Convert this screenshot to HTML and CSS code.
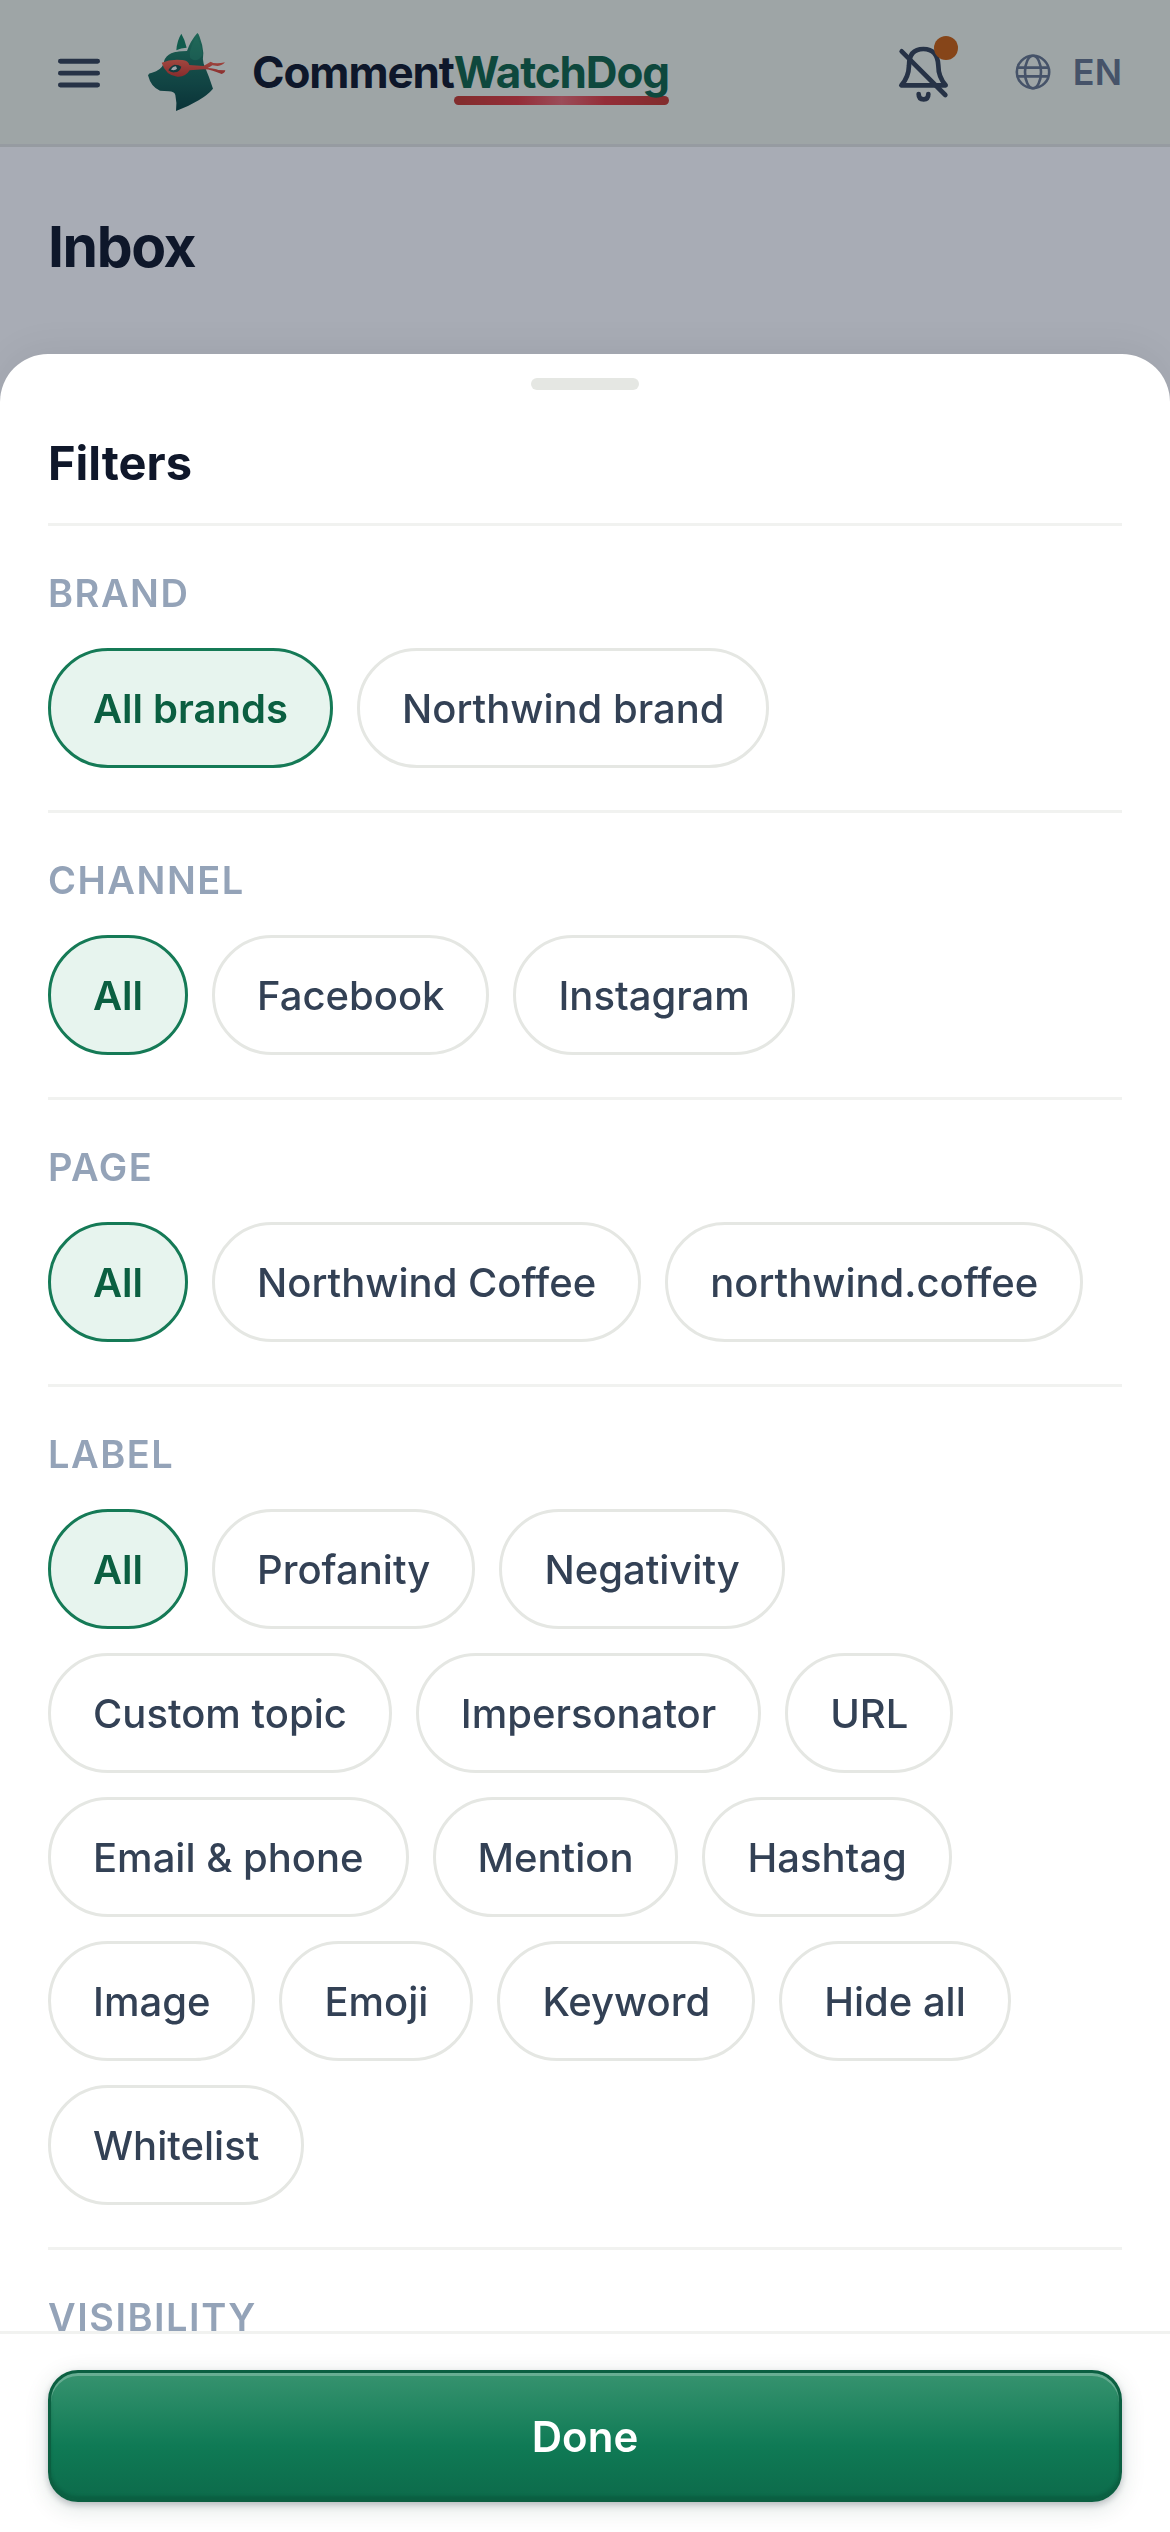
FILE: index.html
```html
<!DOCTYPE html>
<html lang="en">
  <head>
    <meta charset="UTF-8" />
    <meta name="viewport" content="width=device-width, initial-scale=1.0" />
    <title>Inbox</title>
    <link rel="stylesheet" href="styles.css">
  </head>
  <body>
    <header class="topbar">
      <button class="menu-btn" type="button" aria-label="Menu">
        <svg viewBox="0 0 24 24" fill="none" stroke="currentColor" stroke-width="2.2" stroke-linecap="round">
          <path d="M3.75 7.25h16.5M3.75 12.5h16.5M3.75 17.75h16.5" />
        </svg>
      </button>
      <a class="brand" href="#">
        <svg class="brand-logo" viewBox="45 32 246 246">
          <defs>
            <linearGradient id="fur" x1="0" y1="0" x2="0" y2="1">
              <stop offset="0" stop-color="#28926f" />
              <stop offset="0.35" stop-color="#1a6f5b" />
              <stop offset="0.65" stop-color="#135c51" />
              <stop offset="1" stop-color="#08423f" />
            </linearGradient>
            <linearGradient id="mask" x1="0" y1="0" x2="0" y2="1">
              <stop offset="0" stop-color="#f0614a" />
              <stop offset="1" stop-color="#c8382f" />
            </linearGradient>
          </defs>
          <path fill="#128160" d="M151 40 Q138 60 136 90 Q150 82 167 82 Q162 58 151 40Z" />
          <path fill="url(#fur)" d="M199 38 Q203 40 206 50 Q216 76 217 98 Q214 116 218 130 Q235 170 246 205 Q232 222 203 240 Q170 260 135 272 Q138 245 133 224 Q130 213 113 213 L87 211 Q60 201 51 165 Q53 158 63 157 Q90 150 97 132 Q102 94 152 93 L168 92 Q178 62 199 38Z" />
          <path fill="#2f9c78" opacity="0.45" d="M197 46 Q214 82 215 104 Q197 130 178 113 Q170 95 197 46Z" />
          <path fill="none" stroke="#d9e8e2" stroke-width="3" stroke-linecap="round" d="M135 93 Q150 86 167 89" />
          <path fill="url(#mask)" d="M92 127 Q120 115 154 119 Q172 121 175 134 L217 137 Q226 132 239 124 Q250 132 282 126 Q274 136 260 137 L244 135 Q235 141 230 143 Q252 145 262 149 L283 150 Q282 158 272 161 Q254 154 245 151 Q232 147 217 147 L176 150 Q163 171 139 169 Q104 165 92 127Z" />
          <path fill="#154f49" d="M112 150 Q119 136 131 133 Q145 133 151 139 Q147 155 131 156 Q119 157 112 150Z" />
          <path fill="#e8f0ee" d="M120 148 Q126 138 135 138 L138 145 Q132 152 120 148Z" />
        </svg>
        <span class="brand-name">Comment<span class="brand-accent">WatchDog</span></span>
      </a>
      <button class="bell-btn" type="button" aria-label="Notifications">
        <svg viewBox="231 127 162 180" fill="none" stroke="currentColor" stroke-width="14" stroke-linecap="round" stroke-linejoin="round">
          <path d="M241 257 H374 Q352 231 352 198 Q350 148 307 148 Q264 148 264 198 Q263 233 241 257Z" />
          <path d="M242 155L373 286" />
          <path d="M293 283 Q293 299 308 299 Q322 299 322 283" />
        </svg>
        <span class="bell-dot"></span>
      </button>
      <button class="lang-btn" type="button">
        <svg viewBox="0 0 36 36" fill="none" stroke="currentColor" stroke-width="2.6">
          <circle cx="18" cy="18" r="16.2" />
          <ellipse cx="18" cy="18" rx="8" ry="16.2" />
          <path d="M2.5 13.6h31M2.5 22.4h31" />
        </svg>
        EN
      </button>
    </header>
    <main class="page">
      <h1>Inbox</h1>
    </main>

    <div class="overlay">
      <section class="sheet" role="dialog" aria-labelledby="sheet-title">
        <div class="handle"></div>
        <div class="sheet-body">
          <h2 id="sheet-title">Filters</h2>
          <section class="group">
            <h3>Brand</h3>
            <div class="chips">
              <button class="chip active" type="button">All brands</button>
              <button class="chip" type="button">Northwind brand</button>
            </div>
          </section>
          <section class="group">
            <h3>Channel</h3>
            <div class="chips">
              <button class="chip active" type="button">All</button>
              <button class="chip" type="button">Facebook</button>
              <button class="chip" type="button">Instagram</button>
            </div>
          </section>
          <section class="group">
            <h3>Page</h3>
            <div class="chips">
              <button class="chip active" type="button">All</button>
              <button class="chip" type="button">Northwind Coffee</button>
              <button class="chip" type="button">northwind.coffee</button>
            </div>
          </section>
          <section class="group">
            <h3>Label</h3>
            <div class="chips">
              <button class="chip active" type="button">All</button>
              <button class="chip" type="button">Profanity</button>
              <button class="chip" type="button">Negativity</button>
              <button class="chip" type="button">Custom topic</button>
              <button class="chip" type="button">Impersonator</button>
              <button class="chip" type="button">URL</button>
              <button class="chip" type="button">Email &amp; phone</button>
              <button class="chip" type="button">Mention</button>
              <button class="chip" type="button">Hashtag</button>
              <button class="chip" type="button">Image</button>
              <button class="chip" type="button">Emoji</button>
              <button class="chip" type="button">Keyword</button>
              <button class="chip" type="button">Hide all</button>
              <button class="chip" type="button">Whitelist</button>
            </div>
          </section>
          <section class="group">
            <h3>Visibility</h3>
          </section>
        </div>
        <footer class="sheet-footer">
          <button class="done-btn" type="button">Done</button>
        </footer>
      </section>
    </div>
  </body>
</html>
```
FILE: styles.css
```css
* {
  box-sizing: border-box;
}
body {
  margin: 0;
  min-height: 100vh;
  overflow: hidden;
  background-color: #fbfcff;
  color: #0f172a;
  font-family: Inter, "Liberation Sans", sans-serif;
}
h1,
h2,
h3 {
  margin: 0;
}
button {
  padding: 0;
  border: none;
  background: none;
  color: inherit;
  font-family: inherit;
  cursor: pointer;
}
svg {
  display: block;
}

/* top bar */
.topbar {
  display: flex;
  align-items: center;
  height: 147px;
  padding: 0 48px;
  background-color: #ebf2e9;
  border-bottom: 3px solid #dfe2e0;
}
.menu-btn {
  margin-left: 4px;
  color: #334155;
}
.menu-btn svg {
  width: 54px;
  height: 54px;
}
.brand {
  display: flex;
  align-items: center;
  gap: 24px;
  margin-left: 40px;
  margin-right: auto;
  color: inherit;
  text-decoration: none;
}
.brand-logo {
  width: 82px;
  height: 82px;
}
.brand-name {
  position: relative;
  z-index: 0;
  font-size: 44px;
  font-weight: 700;
  line-height: 56px;
  letter-spacing: -0.025em;
}
.brand-accent {
  position: relative;
  color: #0f6347;
}
.brand-accent::after {
  content: "";
  position: absolute;
  z-index: -1;
  left: 0;
  right: 0;
  bottom: -6px;
  height: 9px;
  border-radius: 5px;
  background: linear-gradient(90deg, #c0392f, #dc3a3f 30%, #e66a72 50%, #dc3a3f 70%, #c0392f);
}
.bell-btn {
  position: relative;
  margin-right: 63px;
  color: #334155;
}
.bell-btn svg {
  width: 54px;
  height: 60px;
}
.bell-dot {
  position: absolute;
  top: -6px;
  right: -6px;
  width: 24px;
  height: 24px;
  border-radius: 50%;
  background-color: #c65f10;
}
.lang-btn {
  display: flex;
  align-items: center;
  gap: 22px;
  color: #64748b;
  font-size: 36px;
  font-weight: 600;
}
.lang-btn svg {
  width: 36px;
  height: 36px;
}

.page {
  padding: 64px 48px;
}
.page h1 {
  font-size: 57px;
  font-weight: 700;
  line-height: 72px;
  letter-spacing: -0.025em;
}

/* bottom sheet */
.overlay {
  position: fixed;
  inset: 0;
  display: flex;
  flex-direction: column;
  justify-content: flex-end;
  background-color: rgba(15, 23, 42, 0.35);
}
.sheet {
  display: flex;
  flex-direction: column;
  height: 86vh;
  padding-top: 24px;
  background-color: #fff;
  border-radius: 48px 48px 0 0;
  box-shadow: 0 -6px 36px rgba(15, 23, 20, 0.06);
}
.handle {
  flex: none;
  align-self: center;
  width: 108px;
  height: 12px;
  border-radius: 6px;
  background-color: #e5e7e3;
}
.sheet-body {
  flex: 1;
  min-height: 0;
  padding: 36px 48px 0;
  overflow-y: auto;
  scrollbar-width: none;
}
.sheet-body h2 {
  padding-bottom: 24px;
  font-size: 47px;
  font-weight: 700;
  line-height: 73px;
}
.group {
  padding: 42px 0;
  border-top: 3px solid #f1f2f0;
}
.group h3 {
  color: #94a3b8;
  font-size: 38px;
  font-weight: 600;
  line-height: 50px;
  letter-spacing: 0.04em;
  text-transform: uppercase;
}
.chips {
  display: flex;
  flex-wrap: wrap;
  gap: 24px;
  margin-top: 30px;
}
.chip {
  height: 120px;
  padding: 0 42px;
  border: 3px solid #e5e7e3;
  border-radius: 60px;
  background-color: #fff;
  color: #334155;
  font-size: 40px;
  font-weight: 500;
}
.chip.active {
  border-color: #157a56;
  background-color: #e7f4ee;
  color: #0b5f41;
  font-weight: 600;
}
.sheet-footer {
  padding: 36px 48px 30px;
  border-top: 3px solid #f1f2f0;
}
.done-btn {
  width: 100%;
  height: 132px;
  border: 3px solid #0b5f41;
  border-radius: 30px;
  background: linear-gradient(#37936f, #0f7a55 58%, #0d6b4b);
  box-shadow: inset 0 3px 0 rgba(255, 255, 255, 0.25), inset 0 -3px 3px rgba(0, 60, 40, 0.25), 0 3px 6px rgba(15, 23, 42, 0.22), 0 6px 24px rgba(15, 60, 42, 0.14);
  color: #fff;
  font-size: 42px;
  font-weight: 600;
}
```
